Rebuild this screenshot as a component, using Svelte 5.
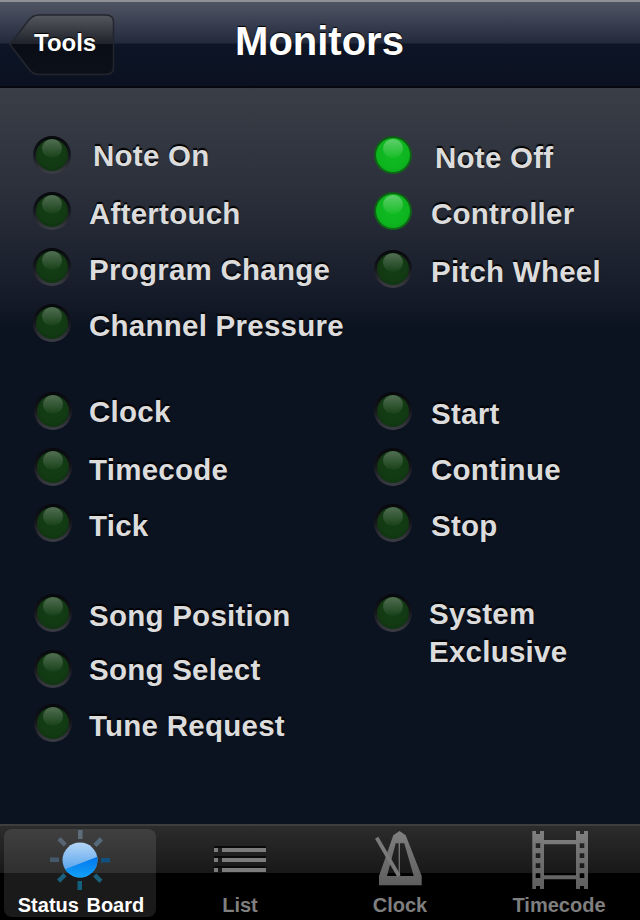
<script>
  // gap = space above the row, dx = led nudge, tx/ty = label offset from the led
  const left = [
    { label: 'Note On', gap: 0, dx: 0, tx: 22, ty: 0 },
    { label: 'Aftertouch', gap: 16, dx: 0, tx: 18, ty: 2 },
    { label: 'Program Change', gap: 16, dx: 0, tx: 18, ty: 2 },
    { label: 'Channel Pressure', gap: 16, dx: 0, tx: 18, ty: 2 },
    { label: 'Clock', gap: 48, dx: 1, tx: 17, ty: 0 },
    { label: 'Timecode', gap: 16, dx: 1, tx: 17, ty: 2 },
    { label: 'Tick', gap: 16, dx: 1, tx: 17, ty: 2 },
    { label: 'Song Position', gap: 50, dx: 1, tx: 17, ty: 2 },
    { label: 'Song Select', gap: 16, dx: 1, tx: 17, ty: 0 },
    { label: 'Tune Request', gap: 14, dx: 1, tx: 17, ty: 2 },
  ];

  const right = [
    { label: 'Note Off', gap: 0, dx: 0, tx: 22, ty: 2, on: true },
    { label: 'Controller', gap: 16, dx: 0, tx: 18, ty: 2, on: true },
    { label: 'Pitch Wheel', gap: 18, dx: 0, tx: 18, ty: 2 },
    { label: 'Start', gap: 102, dx: 0, tx: 18, ty: 2 },
    { label: 'Continue', gap: 16, dx: 0, tx: 18, ty: 2 },
    { label: 'Stop', gap: 16, dx: 0, tx: 18, ty: 2 },
    { label: 'System Exclusive', gap: 50, dx: 0, tx: 16, ty: 0, wrap: true },
  ];

  const rays = [
    { a: 0, c: '#5f6c7a' },
    { a: 45, c: '#566a7e' },
    { a: 90, c: '#12507f' },
    { a: 135, c: '#1c5f78' },
    { a: 180, c: '#135f7c' },
    { a: 225, c: '#1a5f7c' },
    { a: 270, c: '#45596c' },
    { a: 315, c: '#566474' },
  ];
</script>

{#snippet column(items, cls)}
  <div class="col {cls}">
    {#each items as m}
      <div class="row" style="margin-top:{m.gap}px;margin-left:{m.dx}px">
        <span class="led" class:on={m.on}></span>
        <span class="label" class:wrap={m.wrap} style="margin-left:{m.tx}px;margin-top:{m.ty}px">{m.label}</span>
      </div>
    {/each}
  </div>
{/snippet}

<div class="screen">
  <header class="nav">
    <button class="back">
      <svg class="back-shape" width="106" height="62" viewBox="0 0 106 62">
        <defs>
          <linearGradient id="backFill" x1="0" y1="0" x2="0" y2="1">
            <stop offset="0" stop-color="#55585f" />
            <stop offset="0.48" stop-color="#1f222a" />
            <stop offset="0.49" stop-color="#0a0d15" />
            <stop offset="1" stop-color="#0c1019" />
          </linearGradient>
        </defs>
        <path
          d="M1 30.500 L19 7 Q23.500 1 30 1 H97 Q104.500 1 104.500 8 V53 Q104.500 60.500 97 60.500 H30 Q23.500 60.500 19 54 Z"
          fill="url(#backFill)"
          stroke="#23262e"
          stroke-width="1.500"
        />
      </svg>
      <span>Tools</span>
    </button>
    <h1>Monitors</h1>
  </header>

  <main class="board">
    {@render column(left, 'left')}
    {@render column(right, 'right')}
  </main>

  <footer class="tabs">
    <div class="tab active">
      <svg width="64" height="64" viewBox="0 0 64 64">
        <defs>
          <linearGradient id="sunTop" x1="0" y1="0" x2="0" y2="1">
            <stop offset="0" stop-color="#b4d6f6" />
            <stop offset="1" stop-color="#3f97ea" />
          </linearGradient>
          <linearGradient id="sunLow" x1="0" y1="0" x2="0" y2="1">
            <stop offset="0" stop-color="#0073ee" />
            <stop offset="1" stop-color="#15aaf8" />
          </linearGradient>
          <clipPath id="sunClip"><circle cx="32" cy="33" r="17.500" /></clipPath>
        </defs>
        {#each rays as r}
          <rect x="30" y="3" width="4.500" height="9" fill={r.c} transform="rotate({r.a} 32 33)" />
        {/each}
        <circle cx="32" cy="33" r="17.500" fill="url(#sunTop)" />
        <path d="M10 45 L54 28 V55 H10 Z" fill="url(#sunLow)" clip-path="url(#sunClip)" />
      </svg>
      <span class="shifted">Status Board</span>
    </div>

    <div class="tab">
      <svg width="64" height="64" viewBox="0 0 64 64">
        <g fill="#0a0a0a">
          <rect x="6" y="19" width="52" height="2" />
          <rect x="6" y="29" width="52" height="2" />
          <rect x="6" y="39" width="52" height="2" />
        </g>
        <g fill="#7c7c7c">
          <rect x="6" y="21" width="4" height="4" />
          <rect x="14" y="21" width="44" height="4" />
          <rect x="6" y="31" width="4" height="4" />
          <rect x="14" y="31" width="44" height="4" />
          <rect x="6" y="41" width="4" height="4" />
          <rect x="14" y="41" width="44" height="4" />
        </g>
      </svg>
      <span>List</span>
    </div>

    <div class="tab">
      <svg width="64" height="64" viewBox="0 0 64 64">
        <defs>
          <linearGradient id="grayFill" x1="0" y1="0" x2="0" y2="1">
            <stop offset="0" stop-color="#808080" />
            <stop offset="1" stop-color="#5e5e5e" />
          </linearGradient>
        </defs>
        <path
          fill="url(#grayFill)"
          fill-rule="evenodd"
          d="M25.300 8.300 L31.500 4 L37.700 8.300 L53.700 49 V58.300 H11 V49 Z
             M27.700 16.300 H30.600 V49 H19 Z
             M32 16.300 H36.300 L45.700 49 H32 Z"
        />
        <path d="M8.700 10.700 L31 49" stroke="#7a7a7a" stroke-width="3.800" fill="none" />
      </svg>
      <span>Clock</span>
    </div>

    <div class="tab">
      <svg width="64" height="64" viewBox="0 0 64 64">
        <path
          fill="url(#grayFill)"
          fill-rule="evenodd"
          d="M4.300 4 H8 V7 H12 V4 H16 V13 H48 V4 H52 V7 H56 V4 H60 V62 H56 V59 H52 V62 H48 V52.300 H16 V62 H12 V59 H8 V62 H4.300 Z
             M7.700 16.300 V21 H12.300 V16.300 Z M7.700 26.300 V31 H12.300 V26.300 Z M7.700 36.300 V41 H12.300 V36.300 Z M7.700 46.300 V51 H12.300 V46.300 Z
             M51.700 16.300 V21 H56.300 V16.300 Z M51.700 26.300 V31 H56.300 V26.300 Z M51.700 36.300 V41 H56.300 V36.300 Z M51.700 46.300 V51 H56.300 V46.300 Z
             M16 17.300 V48.300 H48 V17.300 Z"
        />
      </svg>
      <span class="timecode">Timecode</span>
    </div>
  </footer>
</div>

<style>
  :global(body) {
    margin: 0;
    background: #0b1220;
  }

  .screen {
    width: 640px;
    height: 920px;
    display: flex;
    flex-direction: column;
    overflow: hidden;
    font-family: 'Liberation Sans', Arial, sans-serif;
    font-weight: 700;
  }

  .nav {
    position: relative;
    height: 88px;
    flex: none;
    box-sizing: border-box;
    padding: 14px 0 0 9px;
    border-top: 2px solid #8e9096;
    border-bottom: 2px solid #05070c;
    background: linear-gradient(#505564 0, #232a3c 41px, #0d1526 42px, #0b1120 84px);
  }

  .back {
    position: relative;
    display: block;
    width: 106px;
    height: 62px;
    margin-top: -2px;
    padding: 0 0 4px 25px;
    border: 0;
    background: none;
    font: inherit;
    font-size: 24px;
    text-align: left;
    color: #fff;
    text-shadow: 0 -1px 1px #000;
  }

  .back-shape {
    position: absolute;
    left: 0;
    top: 0;
  }

  .back span {
    position: relative;
  }

  h1 {
    position: absolute;
    left: 0;
    right: 0;
    top: 16px;
    margin: 0;
    padding-right: 1px;
    text-align: center;
    font-size: 40px;
    line-height: 46px;
    color: #fff;
    text-shadow: 0 -1px 1px #000;
  }

  .board {
    flex: 1;
    display: flex;
    box-sizing: border-box;
    padding-top: 47px;
    background: linear-gradient(#3a3e47 0, #2b303b 100px, #141a28 214px, #0b1220 240px);
  }

  .col {
    display: flex;
    flex-direction: column;
  }

  .left {
    width: 342px;
    padding-left: 33px;
    box-sizing: border-box;
  }

  .right {
    padding-left: 33px;
    margin-left: -1px;
  }

  .row {
    display: flex;
    align-items: flex-start;
    height: 40px;
  }

  .right .label {
    padding-left: 1px;
  }

  .led {
    flex: none;
    position: relative;
    width: 38px;
    height: 38px;
    margin-top: 1px;
    box-sizing: border-box;
    border: 3px solid transparent;
    border-radius: 50%;
    background:
      radial-gradient(circle at 50% 45%, #133e14 0, #123a13 55%, #0d2d0e 100%) padding-box,
      linear-gradient(#07080c 0, #14151a 45%, #3c3e45 100%) border-box;
  }

  .led::after {
    content: '';
    position: absolute;
    left: 6px;
    top: 0;
    width: 20px;
    height: 19px;
    border-radius: 50%;
    background: linear-gradient(rgba(255, 255, 255, 0.27), rgba(255, 255, 255, 0.02));
  }

  .led.on {
    border-width: 2px;
    background:
      radial-gradient(circle at 50% 45%, #10bd22 0, #0db41e 62%, #0a9a18 100%) padding-box,
      linear-gradient(#0e5a14, #0e6a16) border-box;
  }

  .led.on::after {
    left: 7px;
    top: 1px;
    background: linear-gradient(rgba(255, 255, 255, 0.34), rgba(255, 255, 255, 0.03));
  }

  .label {
    font-size: 29.500px;
    line-height: 38px;
    padding-top: 2px;
    letter-spacing: 0.25px;
    white-space: nowrap;
    color: #dcdcdc;
    text-shadow: 0 -2px 1px #000;
  }

  .label.wrap {
    width: 160px;
    white-space: normal;
  }

  .tabs {
    height: 96px;
    flex: none;
    box-sizing: border-box;
    display: grid;
    grid-template-columns: 160px 160px 160px 160px;
    padding: 3px 0 4px;
    border-top: 2px solid #3e3e3e;
    background: linear-gradient(#2c2c2c 0, #181818 47px, #000 47px);
  }

  .tab {
    display: flex;
    flex-direction: column;
    align-items: center;
    justify-content: flex-start;
    margin: 0 4px;
    border-radius: 8px;
    font-size: 20px;
    color: #7f7f7f;
  }

  .tab svg {
    margin-top: -2px;
    flex: none;
  }

  .tab span {
    margin-top: 2px;
    line-height: 24px;
    word-spacing: 2px;
  }

  .tab span.shifted {
    padding-left: 2px;
  }

  .tab span.timecode {
    padding-right: 2px;
  }

  .tab.active {
    background: rgba(255, 255, 255, 0.1);
    color: #fff;
  }
</style>
